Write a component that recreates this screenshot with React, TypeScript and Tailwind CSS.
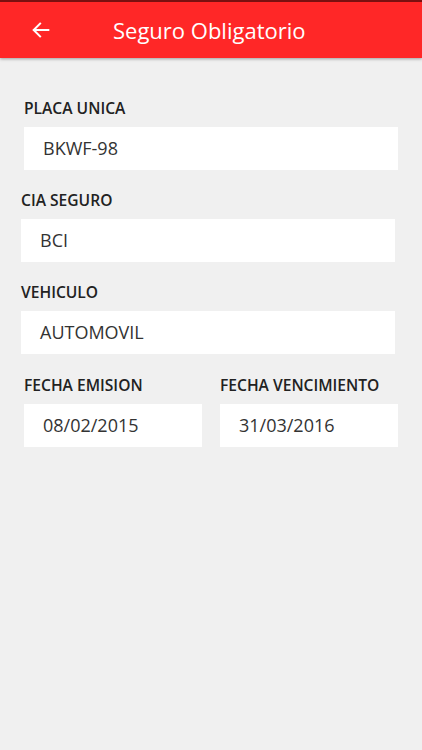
const font = { fontFamily: '"Open Sans", "Noto Sans", sans-serif' }

function Field({ label, value, className }: { label: string; value: string; className: string }) {
  return (
    <div className={className}>
      <div className="text-[15.6px] font-semibold text-[#222] leading-5">{label}</div>
      <div className="mt-[9px] h-[43px] bg-white flex items-center pl-[19px] text-[18px] text-[#333]">{value}</div>
    </div>
  )
}

export default function App() {
  return (
    <div className="w-[422px] h-[750px] bg-[#f0f0f0] overflow-hidden" style={font}>
      <header className="h-[58px] bg-[#ff2727] border-t-2 border-[#7a1010] flex items-center shadow-[0_1px_3px_rgba(0,0,0,0.35)] relative">
        <svg className="ml-[30px] w-[22px] h-[22px]" viewBox="0 0 24 24" fill="none" stroke="white" strokeWidth="2.2" strokeLinecap="square">
          <path d="M20 12H5" />
          <path d="M11 5l-7 7 7 7" />
        </svg>
        <h1 className="ml-[61px] text-[22px] text-white leading-none">Seguro Obligatorio</h1>
      </header>
      <div className="pt-[40px]">
        <Field label="PLACA UNICA" value="BKWF-98" className="ml-[24px] w-[374px]" />
        <Field label="CIA SEGURO" value="BCI" className="ml-[21px] w-[374px] mt-[20px]" />
        <Field label="VEHICULO" value="AUTOMOVIL" className="ml-[21px] w-[374px] mt-[20px]" />
        <div className="flex ml-[24px] mt-[21px] gap-[18px]">
          <Field label="FECHA EMISION" value="08/02/2015" className="w-[178px]" />
          <Field label="FECHA VENCIMIENTO" value="31/03/2016" className="w-[178px]" />
        </div>
      </div>
    </div>
  )
}
